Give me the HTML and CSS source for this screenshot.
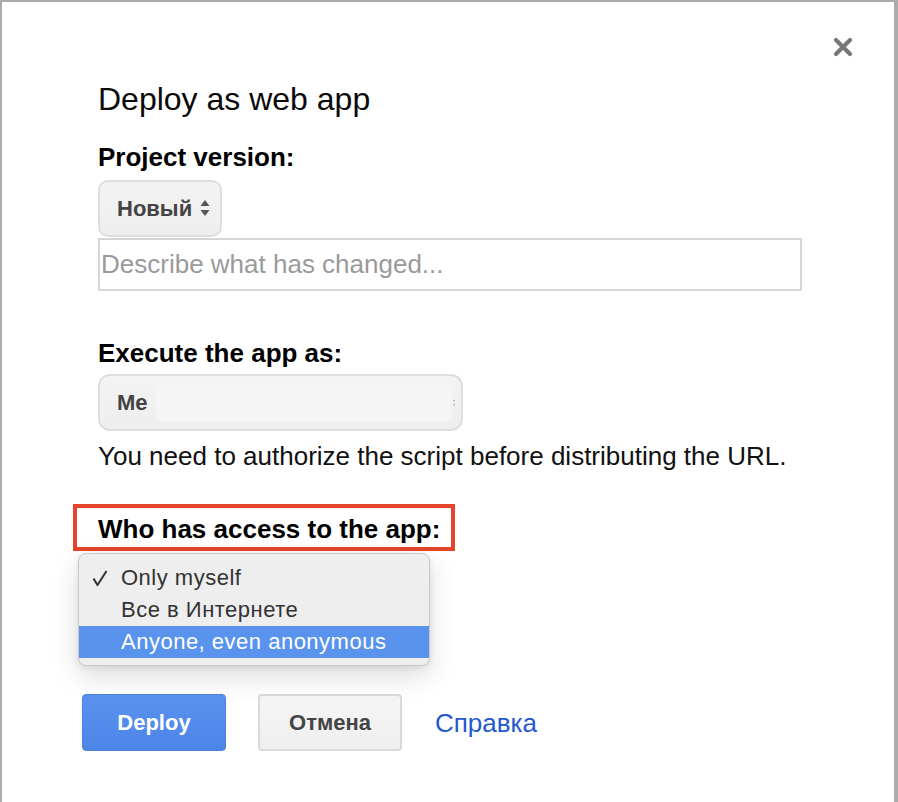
FILE: index.html
```html
<!DOCTYPE html>
<html lang="en">
<head>
<meta charset="utf-8">
<title>Deploy as web app</title>
<link rel="stylesheet" href="styles.css">
</head>
<body>
<div class="dialog">
  <div class="topbar">
    <button class="close" aria-label="Close">
      <svg width="20" height="20" viewBox="0 0 20 20"><path d="M3 3 L17 17 M17 3 L3 17" stroke="#777" stroke-width="4.2" stroke-linecap="round"/></svg>
    </button>
  </div>
  <h1 class="title">Deploy as web app</h1>

  <div class="label label-first">Project version:</div>
  <div class="select select-version">
    <span class="select-text">Новый</span>
    <svg class="updown" width="10" height="17" viewBox="0 0 10 17"><path d="M5 0 L9.5 6 L0.5 6 Z M0.5 10 L9.5 10 L5 16 Z" fill="#555"/></svg>
  </div>
  <div class="input">Describe what has changed...</div>

  <div class="label label-exec">Execute the app as:</div>
  <div class="select select-me">
    <span class="select-text">Me</span>
    <span class="redacted"></span>
    <svg class="dots" width="2" height="8" viewBox="0 0 2 8"><circle cx="1" cy="1.5" r="0.7" fill="#888"/><circle cx="1" cy="6" r="0.7" fill="#888"/></svg>
  </div>
  <p class="note">You need to authorize the script before distributing the URL.</p>

  <div class="highlight-box"><span class="label">Who has access to the app:</span></div>
  <div class="access">
    <ul class="menu">
      <li class="menu-item">
        <svg class="check" width="16" height="16" viewBox="0 0 16 16"><path d="M1.5 8.5 L5.5 15 L14.5 1" fill="none" stroke="#333" stroke-width="2"/></svg>
        Only myself
      </li>
      <li class="menu-item">Все в Интернете</li>
      <li class="menu-item menu-item-active">Anyone, even anonymous</li>
    </ul>
  </div>

  <div class="actions">
    <button class="btn btn-primary">Deploy</button>
    <button class="btn btn-secondary">Отмена</button>
    <a class="help" href="#">Справка</a>
  </div>
</div>
</body>
</html>
```

FILE: styles.css
```css
* { box-sizing: border-box; }
html, body { margin: 0; padding: 0; background: #fff; }
body {
  font-family: "Liberation Sans", Arial, "Noto Sans", sans-serif;
  color: #111;
  width: 898px;
  height: 802px;
  overflow: hidden;
}
.dialog {
  width: 898px;
  height: 802px;
  border-top: 2px solid #ababab;
  border-left: 2px solid #ababab;
  border-right: 4px solid #ababab;
  padding: 35px 0 0 96px;
}
.topbar {
  display: flex;
  justify-content: flex-end;
  height: 20px;
  padding-right: 41px;
}
.close {
  border: 0;
  padding: 0;
  margin: 0;
  background: none;
  width: 20px;
  height: 20px;
  display: block;
  filter: blur(0.4px);
}
.close svg { display: block; }
.title {
  margin: 22px 0 0 0;
  font-size: 32px;
  line-height: 40px;
  font-weight: normal;
  color: #0a0a0a;
}
.label {
  font-size: 26px;
  line-height: 30px;
  font-weight: bold;
  color: #000;
}
.label-first { margin-top: 23px; }
.label-exec { margin-top: 47px; }
.select {
  display: flex;
  align-items: center;
  height: 57px;
  border: 2px solid #dedede;
  border-radius: 10px;
  background: linear-gradient(#f3f3f3, #eeeeee);
  padding-left: 17px;
}
.select-text {
  font-size: 22px;
  line-height: 22px;
  font-weight: bold;
  color: #444;
}
.select-version {
  width: 124px;
  margin-top: 8px;
}
.updown { margin-left: 8px; display: block; }
.input {
  width: 704px;
  height: 53px;
  margin-top: 1px;
  border: 2px solid #d6d6d6;
  padding-left: 1px;
  font-size: 26px;
  line-height: 49px;
  color: #9a9a9a;
}
.select-me {
  width: 365px;
  margin-top: 6px;
  border-radius: 12px;
}
.redacted {
  width: 296px;
  height: 37px;
  margin-left: 8px;
  background: #f5f5f5;
  filter: blur(1px);
}
.dots { margin-left: 1px; display: block; }
.note {
  margin: 10px 0 0 0;
  font-size: 26px;
  line-height: 30px;
  color: #111;
}
.highlight-box {
  display: inline-block;
  margin: 33px 0 0 -25px;
  border: 4px solid #e8432b;
  padding: 6px 11px 3px 21px;
}
.highlight-box .label { display: block; }
.access {
  position: relative;
  margin-top: 2px;
  height: 57px;
}
.menu {
  position: absolute;
  left: -20px;
  top: 0;
  width: 352px;
  margin: 0;
  padding: 8px 0 7px 0;
  list-style: none;
  background: #eeeeee;
  border: 1px solid #c9c9c9;
  border-radius: 8px;
  box-shadow: 0 10px 28px rgba(0, 0, 0, 0.14), 0 2px 6px rgba(0, 0, 0, 0.08);
}
.menu-item {
  position: relative;
  height: 32px;
  line-height: 32px;
  padding-left: 42px;
  font-size: 22px;
  letter-spacing: 0.5px;
  color: #333;
}
.menu-item-active {
  background: #5a93ee;
  color: #fff;
}
.check {
  position: absolute;
  left: 13px;
  top: 8px;
}
.actions {
  display: flex;
  align-items: center;
  margin: 84px 0 0 -16px;
}
.btn {
  width: 144px;
  height: 57px;
  font-family: "Liberation Sans", Arial, sans-serif;
  font-size: 22px;
  line-height: 22px;
  font-weight: bold;
  border-radius: 4px;
  padding: 0;
}
.btn-primary {
  background: linear-gradient(#5b92f0, #4b85e6);
  border: 1px solid #4a7fdc;
  color: #fff;
}
.btn-secondary {
  margin-left: 32px;
  background: linear-gradient(#f5f5f5, #efefef);
  border: 2px solid #dadada;
  color: #444;
}
.help {
  margin-left: 33px;
  font-size: 26px;
  line-height: 30px;
  color: #2259cd;
  text-decoration: none;
}
```
